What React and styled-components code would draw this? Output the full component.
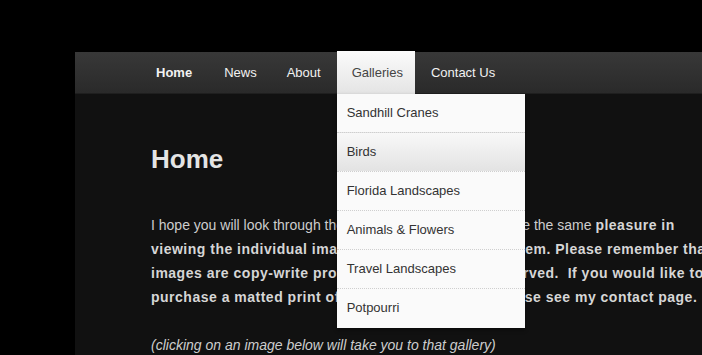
import React from "react";
import styled, { createGlobalStyle } from "styled-components";

const GlobalStyle = createGlobalStyle`
  html, body {
    margin: 0;
    padding: 0;
    background: #000;
    overflow: hidden;
  }
  body {
    font-family: "Liberation Sans", Arial, Helvetica, sans-serif;
  }
`;

const Page = styled.div`
  width: 100vw;
  height: 100vh;
  padding: 52px 0 0 75px;
  box-sizing: border-box;
  overflow: hidden;
`;

const Site = styled.div`
  width: 1100px;
  min-height: 400px;
  background: #111;
`;

const NavBar = styled.div`
  height: 41px;
  background: linear-gradient(to bottom, #383838, #2a2a2a);
  border-bottom: 1px solid #1f1f1f;
  padding-left: 66px;
`;

const NavList = styled.ul`
  display: flex;
  list-style: none;
  margin: 0;
  padding: 0;
  height: 100%;
`;

const NavItem = styled.li`
  position: relative;
  margin-right: ${(p) => (p.$gap ? p.$gap : 0)}px;
`;

const NavLink = styled.a`
  display: block;
  padding: ${(p) => (p.$active ? "0 12px 0 15px" : "0 15px")};
  line-height: ${(p) => (p.$active ? "44px" : "42px")};
  height: ${(p) => (p.$active ? "43px" : "42px")};
  margin-top: ${(p) => (p.$active ? "-1px" : "0")};
  font-size: 13px;
  font-weight: ${(p) => (p.$bold ? 700 : 400)};
  color: ${(p) => (p.$active ? "#444" : "#f2f2f2")};
  background: ${(p) =>
    p.$active ? "linear-gradient(to bottom, #fbfbfb, #e4e4e4)" : "transparent"};
  text-decoration: none;
  cursor: pointer;
  box-sizing: border-box;
`;

const Dropdown = styled.ul`
  position: absolute;
  top: 42px;
  left: 0;
  width: 188px;
  margin: 0;
  padding: 0 0 1px;
  list-style: none;
  background: #fafafa;
  box-shadow: 0 2px 4px rgba(0, 0, 0, 0.4);
  z-index: 10;
`;

const DropItem = styled.li`
  padding: 10px 10px;
  line-height: 18px;
  font-size: 13px;
  color: #333;
  border-top: ${(p) => (p.$first ? "none" : "1px dotted #cfcfcf")};
  background: ${(p) =>
    p.$hover ? "linear-gradient(to bottom, #f8f8f8, #e3e3e3)" : "transparent"};
`;

const Content = styled.div`
  padding: 50px 0 0 76px;
  width: 940px;
`;

const Title = styled.h1`
  margin: 0;
  font-size: 26px;
  line-height: 31px;
  font-weight: 700;
  color: #e4e4e4;
`;

const Text = styled.p`
  margin: ${(p) => (p.$first ? "38px 0 0" : "24px 0 0")};
  font-size: 14px;
  line-height: 24px;
  color: #cdcdcd;
  font-style: ${(p) => (p.$italic ? "italic" : "normal")};
  white-space: nowrap;
`;

const Strong = styled.b`
  font-weight: 700;
  letter-spacing: 0.5px;
  color: #d6d6d6;
`;

const galleries = [
  "Sandhill Cranes",
  "Birds",
  "Florida Landscapes",
  "Animals & Flowers",
  "Travel Landscapes",
  "Potpourri",
];

export default function App() {
  return (
    <>
      <GlobalStyle />
      <Page>
        <Site>
          <NavBar>
            <NavList>
              <NavItem $gap={2}>
                <NavLink $bold>Home</NavLink>
              </NavItem>
              <NavItem>
                <NavLink>News</NavLink>
              </NavItem>
              <NavItem $gap={1}>
                <NavLink>About</NavLink>
              </NavItem>
              <NavItem $gap={1}>
                <NavLink $active>Galleries</NavLink>
                <Dropdown>
                  {galleries.map((g, i) => (
                    <DropItem key={g} $first={i === 0} $hover={g === "Birds"}>
                      {g}
                    </DropItem>
                  ))}
                </Dropdown>
              </NavItem>
              <NavItem>
                <NavLink>Contact Us</NavLink>
              </NavItem>
            </NavList>
          </NavBar>
          <Content>
            <Title>Home</Title>
            <Text $first>
              I hope you will look through these photo galleries and receive the
              same <Strong>pleasure in</Strong>
              <br />
              <Strong>
                viewing the individual images as I did when I took them. Please
                remember that all
              </Strong>
              <br />
              <Strong>
                images are copy-write protected, with all rights reserved.&nbsp; If
                you would like to
              </Strong>
              <br />
              <Strong>
                purchase a matted print of any of these photos, please see my
                contact page.
              </Strong>
            </Text>
            <Text $italic>
              (clicking on an image below will take you to that gallery)
            </Text>
          </Content>
        </Site>
      </Page>
    </>
  );
}
